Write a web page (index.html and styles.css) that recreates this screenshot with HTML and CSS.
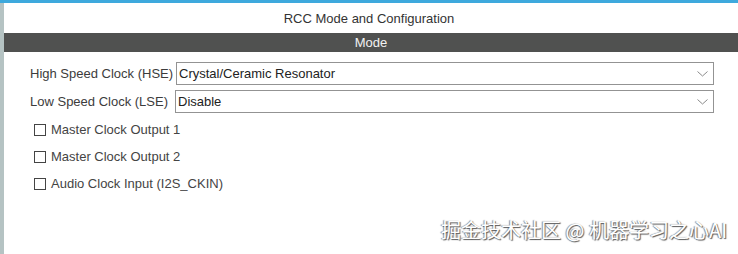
FILE: index.html
```html
<!DOCTYPE html>
<html lang="en">
<head>
  <meta charset="UTF-8">
  <title>RCC Mode and Configuration</title>
  <link rel="stylesheet" href="styles.css">
</head>
<body>
  <div class="frame">
    <div class="side"></div>
    <div class="panel">
      <div class="title">RCC Mode and Configuration</div>
      <div class="section">Mode</div>

      <div class="form">
        <div class="field">
          <label>High Speed Clock (HSE)</label>
          <div class="select hse">
            <span>Crystal/Ceramic Resonator</span>
            <svg class="chev" width="11" height="6" viewBox="0 0 11 6"><path d="M0.5 0.5 L5.5 5 L10.5 0.5" fill="none" stroke="#8a8a8a" stroke-width="1"/></svg>
          </div>
        </div>
        <div class="field">
          <label>Low Speed Clock (LSE)</label>
          <div class="select lse">
            <span>Disable</span>
            <svg class="chev" width="11" height="6" viewBox="0 0 11 6"><path d="M0.5 0.5 L5.5 5 L10.5 0.5" fill="none" stroke="#8a8a8a" stroke-width="1"/></svg>
          </div>
        </div>

        <div class="checks">
          <div class="check"><span class="box"></span>Master Clock Output 1</div>
          <div class="check"><span class="box"></span>Master Clock Output 2</div>
          <div class="check"><span class="box"></span>Audio Clock Input (I2S_CKIN)</div>
        </div>
      </div>
    </div>
  </div>

  <div class="watermark">掘金技术社区 @ 机器学习之心AI</div>
</body>
</html>
```

FILE: styles.css
```css
* {
  box-sizing: border-box;
}

body {
  margin: 0;
  font-family: 'Liberation Sans', Arial, sans-serif;
  font-size: 13px;
  color: #3c3c3c;
  background: #fff;
  border-top: 3px solid #3ea9dd;
  height: 254px;
  overflow: hidden;
}

.frame {
  display: flex;
  height: 251px;
}

.side {
  width: 4px;
  background: #b5c3c3;
}

.panel {
  flex: 1;
}

.title {
  height: 30px;
  line-height: 31px;
  text-align: center;
  color: #333;
  padding-right: 4px;
}

.section {
  height: 19px;
  line-height: 19px;
  background: #505150;
  color: #f2f2f2;
  text-align: center;
}

.form {
  padding: 10px 24px 0 26px;
}

.field {
  display: flex;
  align-items: center;
  margin-bottom: 5px;
}

.field label {
  width: 146px;
  white-space: nowrap;
}

.field .lse {
  margin-left: -1px;
}

.select {
  flex: 1;
  height: 23px;
  border: 1px solid #939393;
  background: #fff;
  display: flex;
  align-items: center;
  justify-content: space-between;
  padding: 0 5px 0 2px;
  color: #222;
}

.checks {
  margin-top: -2px;
  padding-left: 4px;
}

.check {
  display: flex;
  align-items: center;
  height: 27px;
  color: #444;
}

.box {
  width: 12px;
  height: 12px;
  border: 1px solid #444;
  margin-right: 5px;
  background: #fff;
}

.watermark {
  position: absolute;
  right: 11px;
  bottom: 10px;
  font-family: 'Noto Sans CJK SC', sans-serif;
  font-size: 20px;
  color: #fff;
  text-shadow: 1px 1px 1px #555, -1px 0 1px #888;
}
```
